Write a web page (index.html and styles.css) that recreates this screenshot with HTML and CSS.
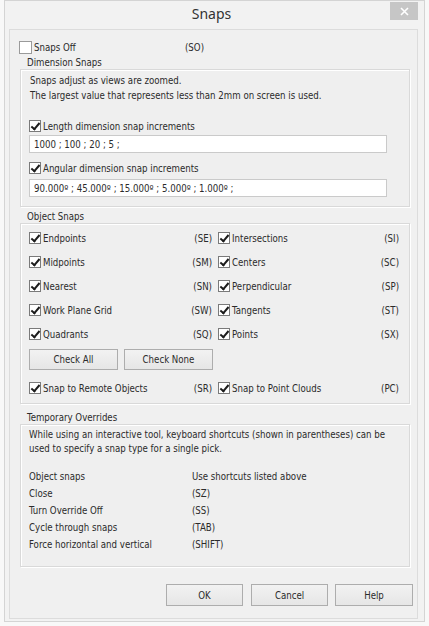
FILE: index.html
```html
<!DOCTYPE html>
<html lang="en">
<head>
    <meta charset="UTF-8">
    <meta name="viewport" content="width=device-width, initial-scale=1.0">
    <title>Snaps</title>
    <link rel="stylesheet" href="styles.css">
</head>
<body>
    <div class="window">
        <div class="titlebar">
            <span class="title">Snaps</span>
            <button class="close" aria-label="Close">
                <svg width="9" height="9" viewBox="0 0 9 9"><path d="M1 1 L8 8 M8 1 L1 8" stroke="#fff" stroke-width="1.6"/></svg>
            </button>
        </div>
        <div class="client">
            <div class="snaps-off">
                <label class="check off-label"><span class="box big"></span>Snaps Off</label>
                <span class="key">(SO)</span>
            </div>

            <div class="legend">Dimension Snaps</div>
            <div class="group dim">
                <p>Snaps adjust as views are zoomed.<br>The largest value that represents less than 2mm on screen is used.</p>
                <label class="check first"><span class="box on"></span>Length dimension snap increments</label>
                <input class="field" type="text" value="1000 ; 100 ; 20 ; 5 ;">
                <label class="check second"><span class="box on"></span>Angular dimension snap increments</label>
                <input class="field" type="text" value="90.000º ; 45.000º ; 15.000º ; 5.000º ; 1.000º ;">
            </div>

            <div class="legend">Object Snaps</div>
            <div class="group objects">
                <div class="snap-grid">
                    <div class="cell"><label class="check"><span class="box on"></span>Endpoints</label><span class="key">(SE)</span></div>
                    <div class="cell"><label class="check"><span class="box on"></span>Intersections</label><span class="key">(SI)</span></div>
                    <div class="cell"><label class="check"><span class="box on"></span>Midpoints</label><span class="key">(SM)</span></div>
                    <div class="cell"><label class="check"><span class="box on"></span>Centers</label><span class="key">(SC)</span></div>
                    <div class="cell"><label class="check"><span class="box on"></span>Nearest</label><span class="key">(SN)</span></div>
                    <div class="cell"><label class="check"><span class="box on"></span>Perpendicular</label><span class="key">(SP)</span></div>
                    <div class="cell"><label class="check"><span class="box on"></span>Work Plane Grid</label><span class="key">(SW)</span></div>
                    <div class="cell"><label class="check"><span class="box on"></span>Tangents</label><span class="key">(ST)</span></div>
                    <div class="cell"><label class="check"><span class="box on"></span>Quadrants</label><span class="key">(SQ)</span></div>
                    <div class="cell"><label class="check"><span class="box on"></span>Points</label><span class="key">(SX)</span></div>
                </div>
                <div class="check-buttons">
                    <button class="btn">Check All</button>
                    <button class="btn">Check None</button>
                </div>
                <div class="snap-grid remote">
                    <div class="cell"><label class="check"><span class="box on"></span>Snap to Remote Objects</label><span class="key">(SR)</span></div>
                    <div class="cell"><label class="check"><span class="box on"></span>Snap to Point Clouds</label><span class="key">(PC)</span></div>
                </div>
            </div>

            <div class="legend">Temporary Overrides</div>
            <div class="group overrides">
                <p>While using an interactive tool, keyboard shortcuts (shown in parentheses) can be used to specify a snap type for a single pick.</p>
                <div class="shortcuts">
                    <span>Object snaps</span><span>Use shortcuts listed above</span>
                    <span>Close</span><span>(SZ)</span>
                    <span>Turn Override Off</span><span>(SS)</span>
                    <span>Cycle through snaps</span><span>(TAB)</span>
                    <span>Force horizontal and vertical</span><span>(SHIFT)</span>
                </div>
            </div>

            <div class="footer">
                <button class="btn ok">OK</button>
                <button class="btn cancel">Cancel</button>
                <button class="btn help">Help</button>
            </div>
        </div>
    </div>
</body>
</html>
```

FILE: styles.css
```css
* {
    box-sizing: border-box;
}
body {
    margin: 0;
    background: #f8f8f8;
    font-family: "DejaVu Sans Condensed", "DejaVu Sans", sans-serif;
    font-size: 9.6px;
    color: #2b2b2b;
}
.window {
    margin-left: 4px;
    width: 421px;
    height: 622px;
    border: 1px solid #d4d4d4;
    background: #f2f2f2;
    display: flex;
    flex-direction: column;
}

/* title bar */
.titlebar {
    height: 28px;
    flex: none;
    display: grid;
    grid-template-columns: 1fr auto 1fr;
    padding-right: 6px;
}
.title {
    grid-column: 2;
    font-family: "Noto Sans", sans-serif;
    font-size: 14px;
    line-height: 25px;
    color: #333;
}
.close {
    grid-column: 3;
    justify-self: end;
    width: 28px;
    height: 18px;
    margin-top: 1px;
    border: 0;
    padding: 0;
    background: #c6c6c6;
    display: flex;
    align-items: center;
    justify-content: center;
}

/* dialog body */
.client {
    height: 590px;
    margin: 0 6px 0 4px;
    border: 1px solid #dcdcdc;
    background: #f0f0f0;
    padding: 0 7px 12px 10px;
}
.check {
    display: flex;
    align-items: center;
    gap: 2px;
    white-space: nowrap;
}
.box {
    width: 12px;
    height: 12px;
    border: 1px solid #7a7a7a;
    background: #fff;
    flex: none;
    position: relative;
}
.box.big {
    width: 13px;
    height: 13px;
    border-color: #9a9a9a;
}
.box.on::after {
    content: "";
    position: absolute;
    left: 3px;
    top: 0px;
    width: 3px;
    height: 7px;
    border: solid #1c1c1c;
    border-width: 0 2px 2px 0;
    transform: rotate(40deg);
}
.key {
    white-space: nowrap;
}
.snaps-off {
    margin: 10px 0 0 -1px;
    height: 14px;
    display: flex;
    align-items: center;
}
.off-label {
    width: 166px;
}
.legend {
    margin-top: 3px;
    height: 12px;
    line-height: 12px;
    padding-left: 7px;
}
.group {
    border: 1px solid #d9d9d9;
    box-shadow: 1px 1px 0 #fff, inset 1px 1px 0 #fff;
    background: #efefef;
}
.group p {
    margin: 0;
}

/* dimension snaps */
.dim {
    height: 138px;
    padding: 3px 8px 0 8px;
}
.dim p {
    line-height: 15px;
    padding-left: 1px;
}
.dim .check {
    height: 14px;
}
.dim .first {
    margin-top: 16px;
}
.dim .second {
    margin-top: 8px;
}
.field {
    display: block;
    width: 358px;
    height: 18px;
    margin-top: 2px;
    border: 1px solid #cacaca;
    background: #fff;
    padding: 0 4px;
    font: inherit;
    color: inherit;
}
.second + .field {
    margin-top: 4px;
}

/* object snaps */
.objects {
    height: 181px;
    padding: 2px 8px 3px;
}
.snap-grid {
    display: grid;
    grid-template-columns: 184px 182px;
    grid-auto-rows: 24px;
    column-gap: 5px;
}
.cell {
    display: flex;
    align-items: center;
    padding-right: 1px;
}
.cell .key {
    margin-left: auto;
}
.check-buttons {
    display: flex;
    gap: 6px;
    margin-top: 3px;
}
.btn {
    height: 21px;
    width: 89px;
    border: 1px solid #adadad;
    background: linear-gradient(#f2f2f2, #e6e6e6);
    font: inherit;
    color: inherit;
    padding: 0;
}
.remote {
    margin-top: 6px;
}
.objects + .legend {
    margin-top: 8px;
}
.dim + .legend {
    margin-top: 4px;
}

/* temporary overrides */
.overrides {
    height: 143px;
    padding: 3px 8px 13px;
}
.overrides p {
    line-height: 14px;
}
.shortcuts {
    margin-top: 12px;
    display: grid;
    grid-template-columns: 163px 1fr;
    grid-auto-rows: 17px;
    align-items: center;
}

/* dialog buttons */
.footer {
    margin: 17px -3px 0 0;
    display: flex;
    justify-content: flex-end;
}
.footer .btn {
    width: 77px;
    height: 22px;
}
.footer .cancel {
    margin-left: 8px;
}
.footer .help {
    margin-left: 7px;
    width: 78px;
}
```
